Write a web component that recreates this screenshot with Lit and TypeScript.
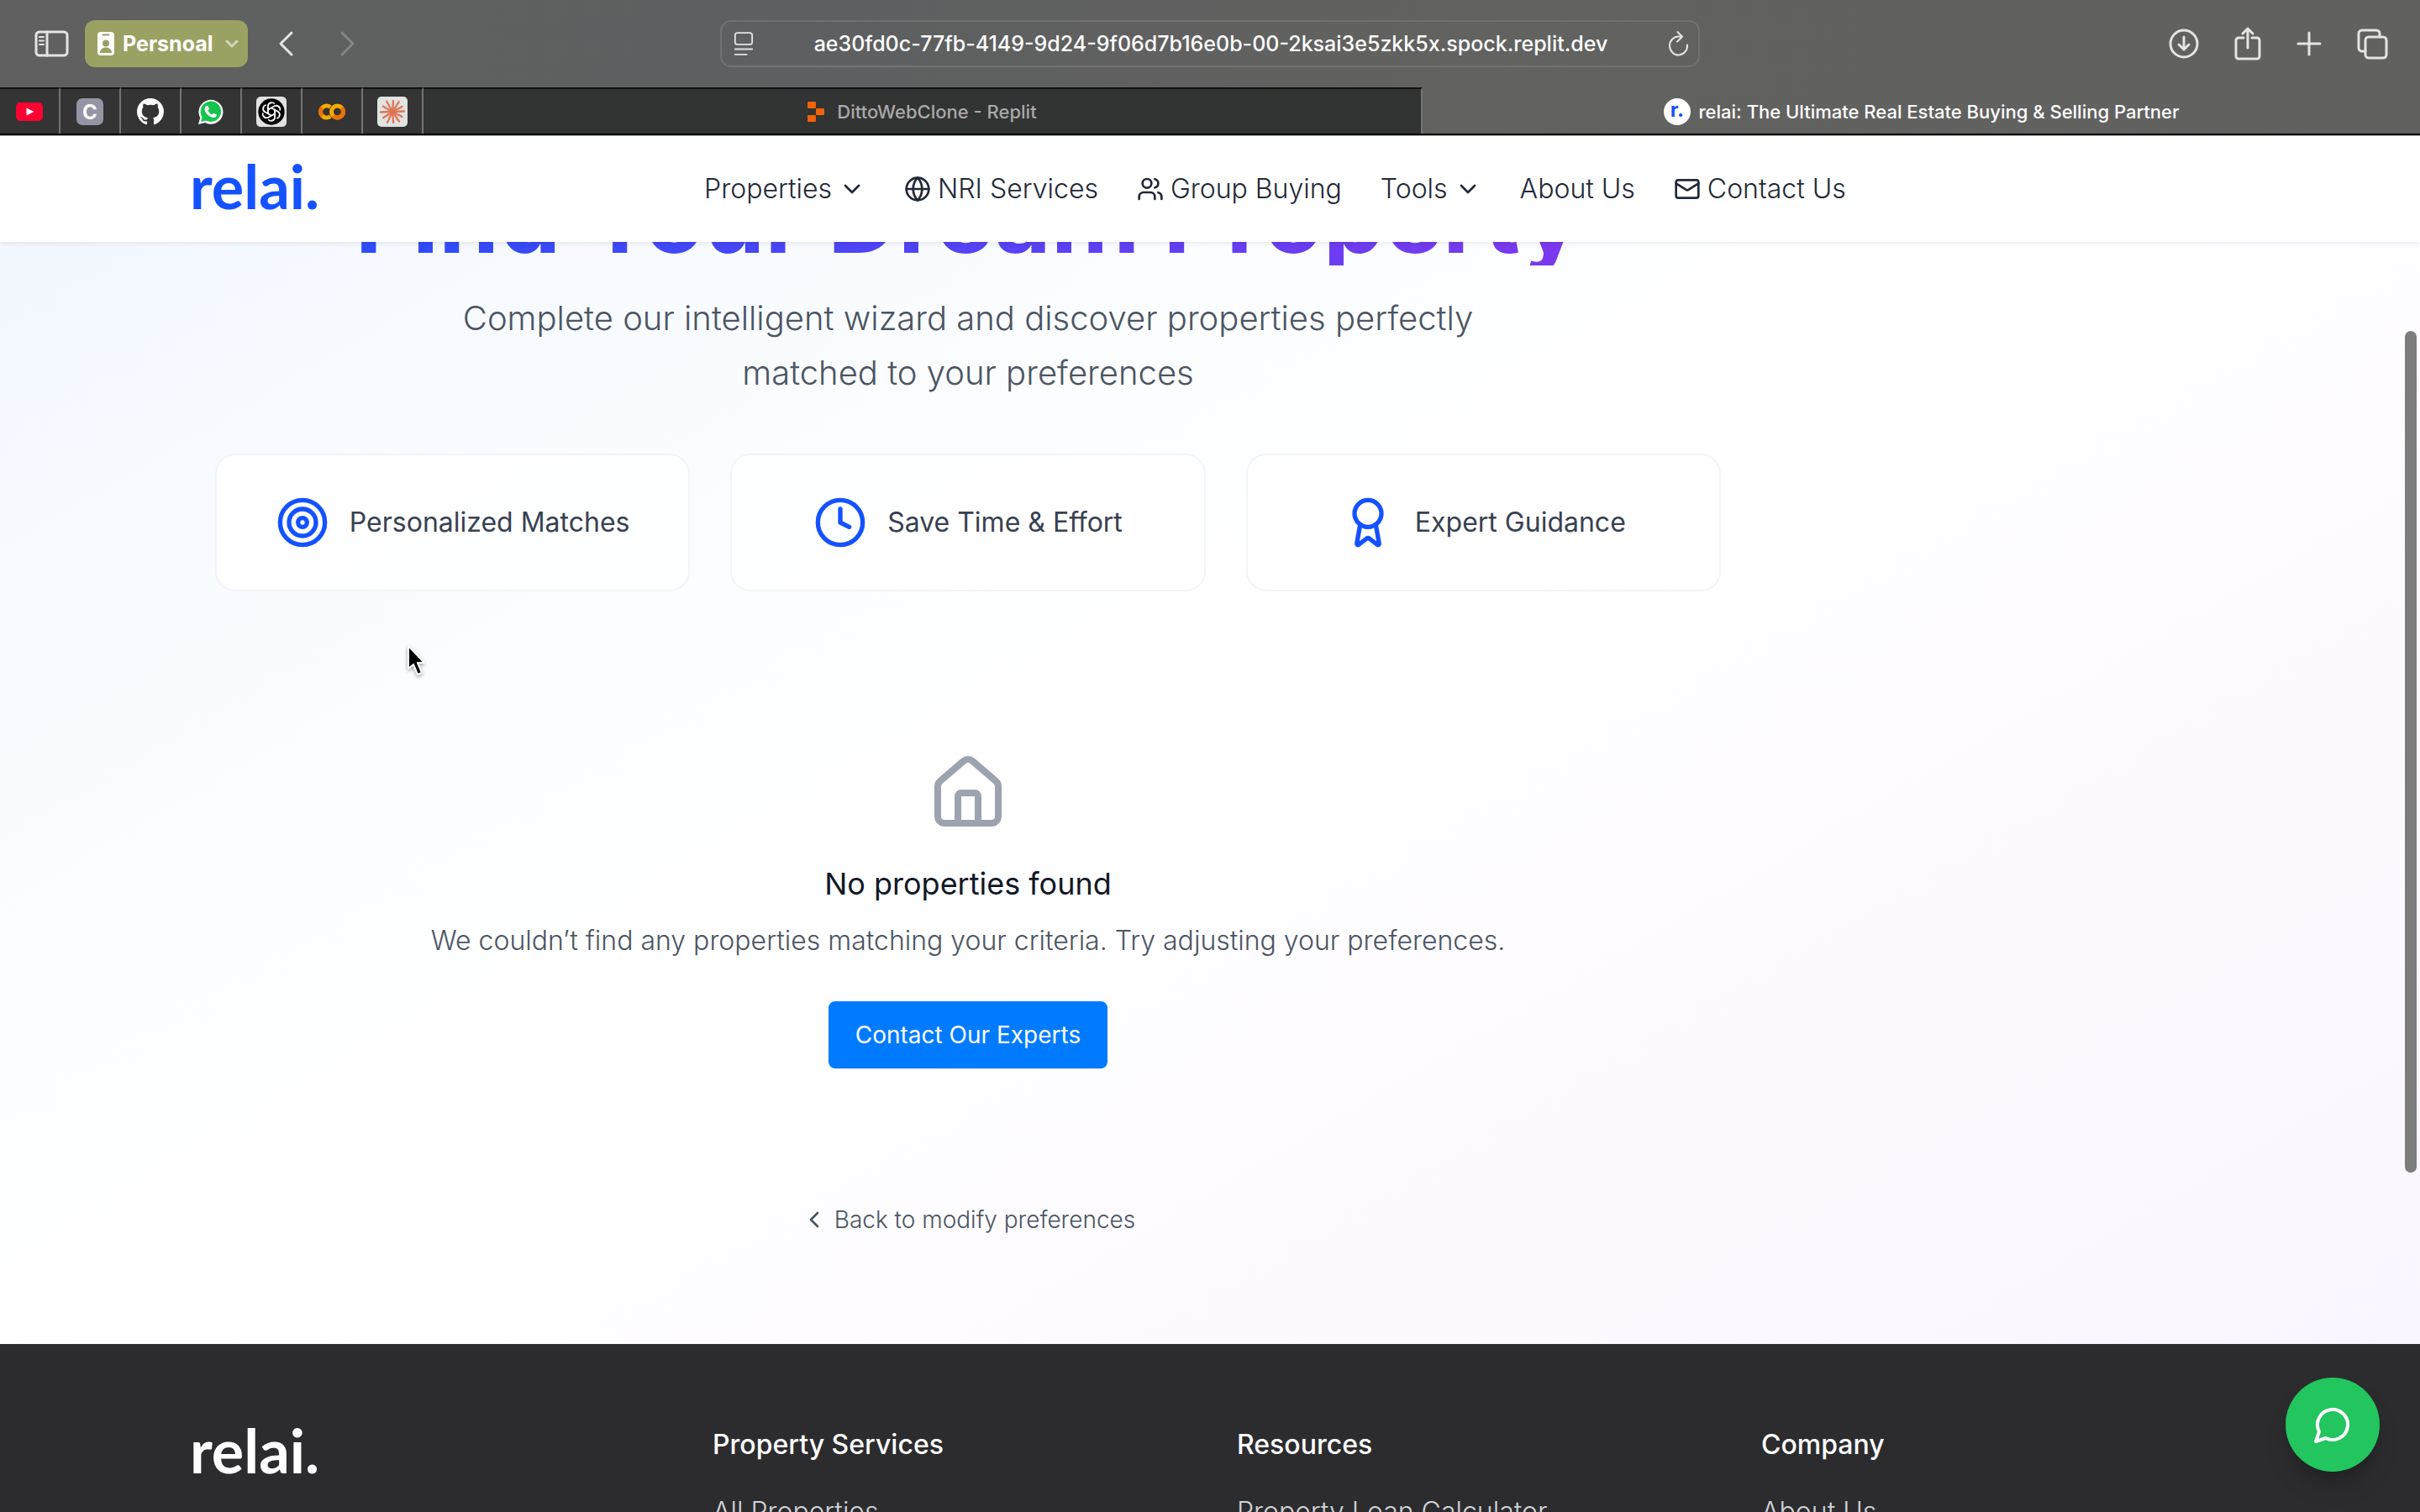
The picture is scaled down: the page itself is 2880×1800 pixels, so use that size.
import { LitElement, html, css, svg, type TemplateResult } from "lit";
import { customElement } from "lit/decorators.js";

const lucide = (cls: string, shape: TemplateResult) => html`
  <svg class=${cls} viewBox="0 0 24 24" fill="none" stroke="currentColor" stroke-width="2"
    stroke-linecap="round" stroke-linejoin="round" aria-hidden="true">${shape}</svg>`;

const shapes = {
  chevronDown: svg`<path d="m6 9 6 6 6-6"/>`,
  chevronLeft: svg`<path d="m15 18-6-6 6-6"/>`,
  globe: svg`<circle cx="12" cy="12" r="10"/><path d="M12 2a14.5 14.5 0 0 0 0 20 14.5 14.5 0 0 0 0-20"/><path d="M2 12h20"/>`,
  users: svg`<path d="M16 21v-2a4 4 0 0 0-4-4H6a4 4 0 0 0-4 4v2"/><circle cx="9" cy="7" r="4"/><path d="M22 21v-2a4 4 0 0 0-3-3.87"/><path d="M16 3.13a4 4 0 0 1 0 7.75"/>`,
  mail: svg`<rect x="2" y="4" width="20" height="16" rx="2"/><path d="m22 7-8.97 5.7a1.94 1.94 0 0 1-2.06 0L2 7"/>`,
  target: svg`<circle cx="12" cy="12" r="10"/><circle cx="12" cy="12" r="6"/><circle cx="12" cy="12" r="2"/>`,
  clock: svg`<circle cx="12" cy="12" r="10"/><path d="M12 6v6l4 2"/>`,
  award: svg`<circle cx="12" cy="8" r="6"/><path d="m15.477 12.89 1.515 8.526a.5.5 0 0 1-.81.47l-3.58-2.687a1 1 0 0 0-1.197 0l-3.586 2.686a.5.5 0 0 1-.81-.469l1.514-8.526"/>`,
  house: svg`<path d="M15 21v-8a1 1 0 0 0-1-1h-4a1 1 0 0 0-1 1v8"/><path d="M3 10a2 2 0 0 1 .709-1.528l7-5.999a2 2 0 0 1 2.582 0l7 5.999A2 2 0 0 1 21 10v9a2 2 0 0 1-2 2H5a2 2 0 0 1-2-2z"/>`,
  message: svg`<path d="M7.9 20A9 9 0 1 0 4 16.1L2 22Z"/>`,
};

@customElement("browser-bar")
export class BrowserBar extends LitElement {
  static styles = css`
    :host {
      display: block;
      font-family: Inter, "Liberation Sans", sans-serif;
      background: linear-gradient(90deg, #5f605f, #5e5f60 35%, #626260 60%, #616160);
      color: #e4e4e4;
    }
    button {
      display: flex;
      align-items: center;
      border: 0;
      padding: 0;
      background: none;
      color: inherit;
      font: inherit;
    }
    svg { display: block; flex: none; }
    .line {
      fill: none;
      stroke: currentColor;
      stroke-width: 3;
      stroke-linecap: round;
      stroke-linejoin: round;
    }
    .thin { stroke-width: 2; }
    .toolbar {
      display: grid;
      grid-template-columns: 857fr 1166fr 857fr;
      align-items: center;
      height: 104px;
    }
    .left { display: flex; align-items: center; padding-left: 41px; }
    .profile {
      height: 56px;
      margin: 0 36px 0 19px;
      padding: 0 10px 0 14px;
      border-radius: 12px;
      background: #9ba162;
      color: #fff;
      font-size: 25px;
      font-weight: 700;
      gap: 9px;
    }
    .caret { margin-left: 4px; color: #d3d6ba; }
    .forward { margin-left: 52px; color: #858684; }
    .address {
      display: flex;
      align-items: center;
      box-sizing: border-box;
      height: 56px;
      padding: 0 10px 0 14px;
      border: 2px solid #727371;
      border-radius: 13px;
    }
    .address input {
      flex: 1;
      min-width: 0;
      border: 0;
      padding: 0;
      background: none;
      color: #fff;
      font: 500 25px Inter, "Liberation Sans", sans-serif;
      text-align: center;
    }
    .right {
      display: flex;
      justify-content: flex-end;
      align-items: center;
      gap: 40px;
      padding-right: 38px;
    }
    .tabs {
      display: flex;
      box-sizing: border-box;
      height: 57px;
      border-bottom: 2px solid #000;
    }
    .pin {
      flex: none;
      justify-content: center;
      box-sizing: border-box;
      width: 72px;
      border-right: 2px solid #747474;
      border-top: 2px solid #111;
      background: #333433;
    }
    .tab {
      flex: 1;
      justify-content: center;
      gap: 10px;
      font-size: 22px;
      font-weight: 500;
      box-sizing: border-box;
      border-top: 2px solid transparent;
      color: #fff;
    }
    .idle {
      border-top-color: #111;
      border-right: 2px solid #747474;
      background: #323333;
      color: #a9a9aa;
      gap: 15px;
    }
    .edge { height: 1px; background: #b0b0b0; }
    .letter { font: 700 24px Inter, sans-serif; fill: #fff; text-anchor: middle; }
    .brand { fill: #1452ff; }
  `;

  render() {
    return html`
      <div class="toolbar">
        <div class="left">
          <button aria-label="Sidebar">
            <svg class="line" width="41" height="32" viewBox="0 0 41 32">
              <rect x="2" y="2" width="37" height="28" rx="4"/>
              <path d="M15 2v28"/><path class="thin" d="M6 8h5M6 12.500h5M6 17h5"/>
            </svg>
          </button>
          <button class="profile">
            <svg width="22" height="28" viewBox="0 0 22 28">
              <rect x="1" y="0" width="20" height="28" rx="4" fill="#fff"/>
              <path d="M7.500 3.500h7" stroke="#9ba162" stroke-width="2" stroke-linecap="round"/>
              <circle cx="11" cy="13.500" r="4" fill="#9ba162"/>
              <path d="M4 25c0-4 3-6.500 7-6.500s7 2.500 7 6.500z" fill="#9ba162"/>
            </svg>
            <span>Persnoal</span>
            <svg class="line caret" width="18" height="12" viewBox="0 0 18 12"><path d="m3 3 6 6 6-6"/></svg>
          </button>
          <button aria-label="Back">
            <svg class="line" width="20" height="32" viewBox="0 0 20 32"><path d="M16 3 3 16l13 13"/></svg>
          </button>
          <button class="forward" aria-label="Forward">
            <svg class="line" width="20" height="32" viewBox="0 0 20 32"><path d="m4 3 13 13L4 29"/></svg>
          </button>
        </div>
        <div class="address">
          <svg class="line" width="24" height="30" viewBox="0 0 26 32">
            <rect class="thin" x="2" y="2" width="22" height="15" rx="3"/><path class="thin" d="M2 23h22M2 30h15"/>
          </svg>
          <input type="text" aria-label="Address" value="ae30fd0c-77fb-4149-9d24-9f06d7b16e0b-00-2ksai3e5zkk5x.spock.replit.dev">
          <button aria-label="Reload">
            <svg class="line thin" width="26" height="32" viewBox="0 0 26 32">
              <path d="M23 17.500A10.500 11 0 1 1 13 7.500h3.500M11.500 2l5.500 5.700-6 5.800"/>
            </svg>
          </button>
        </div>
        <div class="right">
          <button aria-label="Downloads">
            <svg class="line" width="38" height="38" viewBox="0 0 38 38">
              <circle cx="19" cy="19" r="16"/><path d="M19 11v15m-6-6 6 6 6-6"/>
            </svg>
          </button>
          <button aria-label="Share">
            <svg class="line" width="34" height="42" viewBox="0 0 34 42">
              <path d="M12 14H6a3 3 0 0 0-3 3v19a3 3 0 0 0 3 3h22a3 3 0 0 0 3-3V17a3 3 0 0 0-3-3h-6M17 26V3m-6 6 6-6 6 6"/>
            </svg>
          </button>
          <button aria-label="New tab">
            <svg class="line" width="32" height="32" viewBox="0 0 32 32"><path d="M16 3v26M3 16h26"/></svg>
          </button>
          <button aria-label="Tab overview">
            <svg class="line" width="38" height="38" viewBox="0 0 38 38">
              <rect x="11" y="11" width="25" height="25" rx="4"/>
              <path d="M11 28H7a4 4 0 0 1-4-4V7a4 4 0 0 1 4-4h17a4 4 0 0 1 4 4v4"/>
            </svg>
          </button>
        </div>
      </div>
      <div class="tabs">
        <button class="pin" aria-label="YouTube">
          <svg width="32" height="22" viewBox="0 0 32 22">
            <rect width="32" height="22" rx="5" fill="#ff0033"/><path d="M12.500 6.500v9l9-4.500z" fill="#fff"/>
          </svg>
        </button>
        <button class="pin" aria-label="C">
          <svg width="32" height="32" viewBox="0 0 32 32">
            <rect width="32" height="32" rx="7" fill="#9495a4"/><text class="letter" x="16" y="25">C</text>
          </svg>
        </button>
        <button class="pin" aria-label="GitHub">
          <svg width="32" height="32" viewBox="0 0 16 16">
            <path fill="#fff" d="M8 0C3.580 0 0 3.580 0 8c0 3.540 2.290 6.530 5.470 7.590.4.070.55-.17.55-.38 0-.19-.01-.82-.01-1.490-2.010.37-2.530-.49-2.690-.94-.09-.23-.48-.94-.82-1.130-.28-.15-.68-.52-.01-.53.63-.01 1.080.58 1.230.82.72 1.210 1.870.87 2.330.66.07-.52.28-.87.51-1.070-1.780-.2-3.640-.89-3.640-3.950 0-.87.31-1.590.82-2.150-.08-.2-.36-1.020.08-2.120 0 0 .67-.21 2.200.82.64-.18 1.320-.27 2-.27s1.360.09 2 .27c1.530-1.040 2.200-.82 2.200-.82.44 1.100.16 1.920.08 2.120.51.56.82 1.270.82 2.150 0 3.070-1.870 3.750-3.650 3.950.29.25.54.73.54 1.480 0 1.070-.01 1.930-.01 2.200 0 .21.15.46.55.38A8.010 8.010 0 0 0 16 8c0-4.420-3.580-8-8-8z"/>
          </svg>
        </button>
        <button class="pin" aria-label="WhatsApp">
          <svg width="32" height="32" viewBox="0 0 32 32">
            <path d="M1 31l2.200-7.800A14.500 14.500 0 1 1 9 29z" fill="#fff"/>
            <path d="M4 28l1.600-5.600A12.200 12.200 0 1 1 10 26.500z" fill="#16c44d"/>
            <path fill="#fff" d="M11.500 8.800c.6 0 .9.100 1.200.7l1.200 2.900c.1.400 0 .8-1.400 2.300.9 2 2.700 3.800 5 4.800.9-1 1.400-1.900 1.900-1.700l3.100 1.500c.5.300.4.800.2 1.500-.5 1.500-2.300 2.400-3.800 2.200-5-.7-9.600-5-10.300-9.200-.3-2.200.9-5 2.900-5z"/>
          </svg>
        </button>
        <button class="pin" aria-label="ChatGPT">
          <svg width="36" height="36" viewBox="0 0 62 62">
            <rect width="62" height="62" rx="9" fill="#e2e2e2"/><circle cx="31" cy="31" r="27" fill="#000"/>
            <g fill="none" stroke="#fff" stroke-width="2.600" stroke-linejoin="round">
              ${[0, 60, 120, 180, 240, 300].map(
                (a) => svg`<path transform=${`rotate(${a} 31 31)`} d="M24 35V19.500a7.500 7.500 0 0 1 13.500-4.500M24 27l13-7.500a7.500 7.500 0 0 1 10 3"/>`,
              )}
            </g>
          </svg>
        </button>
        <button class="pin" aria-label="Colab">
          <svg width="32" height="20" viewBox="0 0 32 20" fill="none" stroke-width="5">
            <path d="M14 4.500A7 7 0 1 0 14 15.500" stroke="#f9ab00"/><path d="M4.500 5A7 7 0 0 0 4.500 15" stroke="#e8710a"/>
            <circle cx="22.500" cy="10" r="7" stroke="#f9ab00"/><path d="M27.500 5A7 7 0 0 1 17.500 15" stroke="#e8710a"/>
          </svg>
        </button>
        <button class="pin" aria-label="Claude">
          <svg width="36" height="36" viewBox="0 0 36 36">
            <rect width="36" height="36" rx="5" fill="#e2e2e2"/>
            <circle cx="18" cy="18" r="4" fill="#dd7656"/>
            <g stroke="#dd7656" stroke-width="2.300" stroke-linecap="round">
              ${[4, 33, 62, 88, 118, 145, 175, 205, 236, 268, 300, 331].map(
                (a, i) => svg`<path transform=${`rotate(${a} 18 18)`} d=${i % 2 ? "M18 18V4" : "M18 18V5"}/>`,
              )}
            </g>
          </svg>
        </button>
        <button class="tab idle">
          <svg width="20" height="24" viewBox="0 0 20 24" fill="#f26207">
            <rect width="10" height="8" rx="1"/><rect x="10" y="8" width="10" height="8" rx="1"/><rect y="16" width="10" height="8" rx="1"/>
          </svg>
          <span>DittoWebClone - Replit</span>
        </button>
        <button class="tab">
          <svg width="32" height="32" viewBox="0 0 32 32">
            <circle cx="16" cy="16" r="16" fill="#fff"/><text class="letter brand" x="16" y="22">r.</text>
          </svg>
          <span>relai: The Ultimate Real Estate Buying &amp; Selling Partner</span>
        </button>
      </div>
      <div class="edge"></div>
    `;
  }
}

@customElement("app-root")
export class AppRoot extends LitElement {
  static styles = css`
    :host {
      display: flex;
      flex-direction: column;
      position: relative;
      height: 100vh;
      overflow: hidden;
      background: #fff;
      font-family: Inter, "Liberation Sans", sans-serif;
      font-size: 32px;
      line-height: 48px;
      font-weight: 300;
      color: #1f2937;
    }
    h1, h2, h3, p, ul { margin: 0; padding: 0; font-size: inherit; font-weight: inherit; list-style: none; }
    a { color: inherit; text-decoration: none; }
    button { border: 0; padding: 0; background: none; color: inherit; font: inherit; }
    svg { display: block; flex: none; }
    .page { flex: 1; min-height: 0; overflow: hidden; }
    .header {
      position: relative;
      z-index: 1;
      background: #fff;
      box-shadow: 0 2px 6px rgba(0, 0, 0, 0.08);
    }
    .wrap { max-width: 2432px; margin: 0 auto; padding: 0 224px; }
    .bar { display: flex; align-items: center; gap: 458px; height: 126px; }
    .logo {
      padding: 0 0 8px 2px;
      font-family: Lato, "Liberation Sans", sans-serif;
      font-size: 72px;
      line-height: 60px;
      font-weight: 700;
      color: #1452ff;
    }
    .nav { display: flex; gap: 46px; }
    .item { display: flex; align-items: center; gap: 8px; white-space: nowrap; }
    .small { width: 32px; height: 32px; }
    .main {
      margin-top: -380px;
      padding-top: 294px;
      background: linear-gradient(to bottom right, #eff6ff, #fff, #faf5ff);
    }
    .column {
      display: flex;
      flex-direction: column;
      align-items: center;
      width: 80%;
      padding-bottom: 128px;
      text-align: center;
    }
    .title {
      align-self: stretch;
      background: linear-gradient(90deg, #1752ff, #9333ea);
      background-clip: text;
      -webkit-background-clip: text;
      color: transparent;
      font-size: 116px;
      line-height: 114px;
      font-weight: 700;
    }
    .lead {
      max-width: 1344px;
      margin: 30px 0 64px;
      font-size: 40px;
      line-height: 65px;
      color: #4b5563;
    }
    .cards {
      display: grid;
      grid-template-columns: repeat(3, 1fr);
      gap: 48px;
      width: 1792px;
      max-width: 100%;
    }
    .card {
      display: flex;
      align-items: center;
      justify-content: center;
      gap: 24px;
      padding: 48px;
      border: 2px solid #f3f4f6;
      border-radius: 24px;
      background: rgba(255, 255, 255, 0.8);
      color: #374151;
      font-weight: 400;
    }
    .feature { width: 64px; height: 64px; color: #1452ff; }
    .empty {
      display: flex;
      flex-direction: column;
      align-items: center;
      margin: 192px 0 160px;
    }
    .home { width: 96px; height: 96px; margin-bottom: 32px; color: #9ca3af; }
    .none { font-size: 36px; line-height: 56px; font-weight: 400; color: #111827; margin-bottom: 16px; }
    .hint { color: #4b5563; margin-bottom: 48px; }
    .cta {
      height: 80px;
      padding: 0 32px;
      border-radius: 8px;
      background: #007bff;
      color: #fff;
      font-size: 28px;
      line-height: 40px;
      font-weight: 400;
    }
    .back {
      display: flex;
      align-items: center;
      gap: 8px;
      font-size: 28px;
      line-height: 40px;
      color: #4b5563;
    }
    .footer { background: #2c2c2e; color: #d1d5db; }
    .columns {
      display: grid;
      grid-template-columns: repeat(4, 1fr);
      gap: 64px;
      padding-top: 96px;
      white-space: nowrap;
    }
    .white { color: #fff; }
    .group { font-weight: 500; color: #fff; margin-bottom: 32px; }
    .chat {
      position: absolute;
      right: 48px;
      bottom: 48px;
      display: grid;
      place-items: center;
      width: 112px;
      height: 112px;
      border-radius: 50%;
      background: #22c55e;
      color: #fff;
      box-shadow: 0 20px 30px -6px rgba(0, 0, 0, 0.2), 0 8px 12px -8px rgba(0, 0, 0, 0.2);
    }
    .bubble { width: 48px; height: 48px; }
    .thumb {
      position: absolute;
      right: 4px;
      top: 394px;
      width: 14px;
      height: 1002px;
      border-radius: 7px;
      background: #7d7d7e;
    }
    .cursor { position: absolute; left: 482px; top: 766px; filter: drop-shadow(0 2px 2px rgba(0, 0, 0, 0.35)); }
  `;

  private footerGroup(title: string, link: string) {
    return html`<div>
      <h3 class="group">${title}</h3>
      <ul><li><a href="#">${link}</a></li></ul>
    </div>`;
  }

  render() {
    return html`
      <browser-bar></browser-bar>
      <div class="page">
        <header class="header">
          <div class="wrap bar">
            <a class="logo" href="#">relai.</a>
            <nav class="nav">
              <button class="item">Properties ${lucide("small", shapes.chevronDown)}</button>
              <a class="item" href="#">${lucide("small", shapes.globe)} NRI Services</a>
              <a class="item" href="#">${lucide("small", shapes.users)} Group Buying</a>
              <button class="item">Tools ${lucide("small", shapes.chevronDown)}</button>
              <a class="item" href="#">About Us</a>
              <a class="item" href="#">${lucide("small", shapes.mail)} Contact Us</a>
            </nav>
          </div>
        </header>
        <main class="main">
          <div class="column">
            <h1 class="title">Find Your Dream Property</h1>
            <p class="lead">Complete our intelligent wizard and discover properties perfectly matched to your preferences</p>
            <div class="cards">
              <div class="card">${lucide("feature", shapes.target)} Personalized Matches</div>
              <div class="card">${lucide("feature", shapes.clock)} Save Time &amp; Effort</div>
              <div class="card">${lucide("feature", shapes.award)} Expert Guidance</div>
            </div>
            <section class="empty">
              ${lucide("home", shapes.house)}
              <h2 class="none">No properties found</h2>
              <p class="hint">We couldn’t find any properties matching your criteria. Try adjusting your preferences.</p>
              <button class="cta">Contact Our Experts</button>
            </section>
            <button class="back">${lucide("small", shapes.chevronLeft)} Back to modify preferences</button>
          </div>
        </main>
        <footer class="footer">
          <div class="wrap columns">
            <a class="logo white" href="#">relai.</a>
            ${this.footerGroup("Property Services", "All Properties")}
            ${this.footerGroup("Resources", "Property Loan Calculator")}
            ${this.footerGroup("Company", "About Us")}
          </div>
        </footer>
      </div>
      <button class="chat" aria-label="Chat">${lucide("bubble", shapes.message)}</button>
      <div class="thumb"></div>
      <svg class="cursor" width="30" height="42" viewBox="0 0 30 42" aria-hidden="true">
        <path d="M4 3v27l6-5 5 12 5-2-5-12h8z" fill="#000" stroke="#fff" stroke-width="2" stroke-linejoin="round"/>
      </svg>
    `;
  }
}
